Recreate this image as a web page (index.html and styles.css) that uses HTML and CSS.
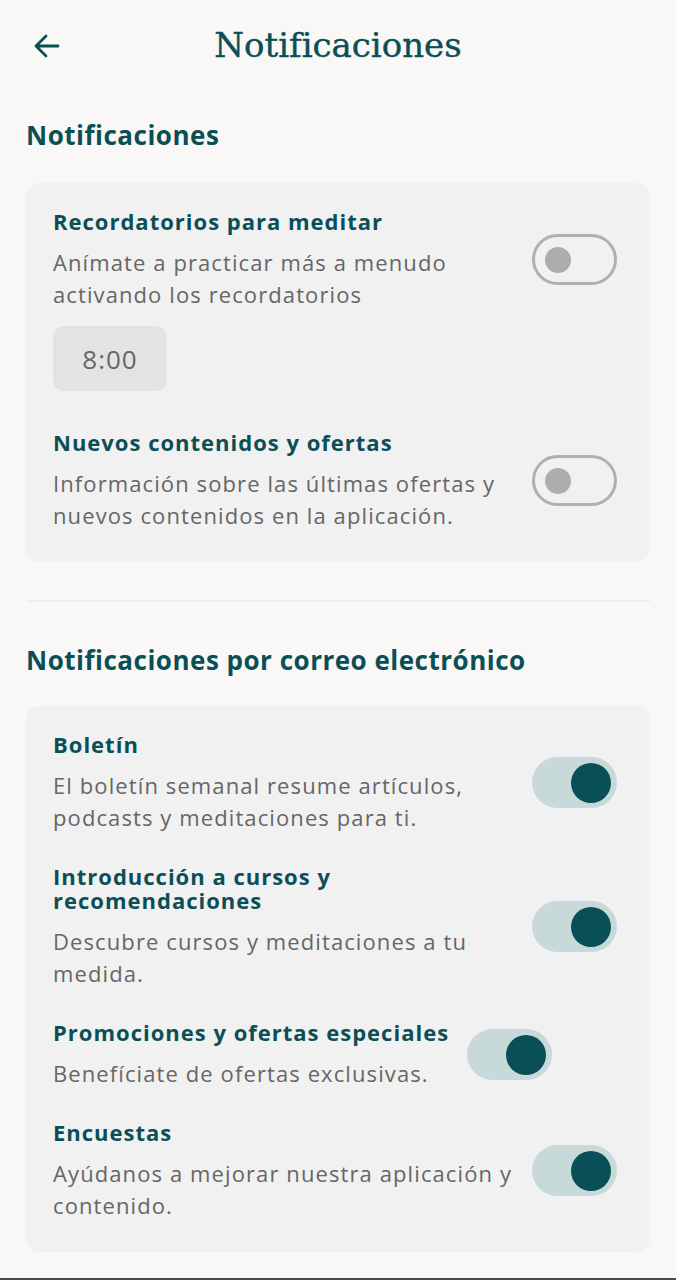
FILE: index.html
```html
<!DOCTYPE html>
<html lang="es">
<head>
<meta charset="utf-8">
<title>Notificaciones</title>
<link rel="stylesheet" href="styles.css">
</head>
<body>
<div class="page">
  <header class="topbar">
    <button class="back" aria-label="Volver">
      <svg width="30" height="30" viewBox="0 0 30 30"><path d="M27 15H5M15 5L5 15L15 25" fill="none" stroke="#0b4f56" stroke-width="2.8" stroke-linecap="round" stroke-linejoin="round"/></svg>
    </button>
    <h1 class="title">Notificaciones</h1>
  </header>

  <main class="content">
    <h2 class="section-heading">Notificaciones</h2>
    <section class="card">
      <div class="item">
        <div class="row">
          <div class="text">
            <h3 class="item-title">Recordatorios para meditar</h3>
            <p class="item-desc">Anímate a practicar más a menudo activando los recordatorios</p>
          </div>
          <span class="toggle off"><span class="knob"></span></span>
        </div>
        <div class="time-chip">8:00</div>
      </div>
      <div class="item">
        <div class="row">
          <div class="text">
            <h3 class="item-title">Nuevos contenidos y ofertas</h3>
            <p class="item-desc">Información sobre las últimas ofertas y nuevos contenidos en la aplicación.</p>
          </div>
          <span class="toggle off"><span class="knob"></span></span>
        </div>
      </div>
    </section>

    <hr class="divider">

    <h2 class="section-heading">Notificaciones por correo electrónico</h2>
    <section class="card">
      <div class="item">
        <div class="row">
          <div class="text">
            <h3 class="item-title">Boletín</h3>
            <p class="item-desc">El boletín semanal resume artículos, podcasts y meditaciones para ti.</p>
          </div>
          <span class="toggle on"><span class="knob"></span></span>
        </div>
      </div>
      <div class="item">
        <div class="row">
          <div class="text">
            <h3 class="item-title">Introducción a cursos y recomendaciones</h3>
            <p class="item-desc">Descubre cursos y meditaciones a tu medida.</p>
          </div>
          <span class="toggle on"><span class="knob"></span></span>
        </div>
      </div>
      <div class="item">
        <div class="row">
          <div class="text">
            <h3 class="item-title">Promociones y ofertas especiales</h3>
            <p class="item-desc">Benefíciate de ofertas exclusivas.</p>
          </div>
          <span class="toggle on"><span class="knob"></span></span>
        </div>
      </div>
      <div class="item">
        <div class="row">
          <div class="text">
            <h3 class="item-title">Encuestas</h3>
            <p class="item-desc">Ayúdanos a mejorar nuestra aplicación y contenido.</p>
          </div>
          <span class="toggle on"><span class="knob"></span></span>
        </div>
      </div>
    </section>
  </main>
  <div class="navline"></div>
</div>
</body>
</html>
```
FILE: styles.css
```css
* { box-sizing: border-box; }
html, body { margin: 0; padding: 0; }
body {
  background: #f9f8f6;
  font-family: "Open Sans", "Noto Sans", sans-serif;
  color: #0b4f56;
}
.page {
  min-height: 1280px;
  display: flex;
  flex-direction: column;
}
.topbar {
  position: relative;
  height: 90px;
  display: flex;
  align-items: center;
  justify-content: center;
}
.back {
  position: absolute;
  left: 31px;
  top: 31px;
  width: 30px;
  height: 30px;
  padding: 0;
  border: 0;
  background: none;
  display: flex;
}
.title {
  margin: 0;
  font-family: "DejaVu Serif", "Liberation Serif", serif;
  font-weight: 400;
  font-size: 34px;
  line-height: 40px;
  color: #0b4f56;
  -webkit-text-stroke: 0.4px #0b4f56;
}
.content {
  padding: 0 26px;
  display: flex;
  flex-direction: column;
}
.section-heading {
  margin: 29px 0 32px;
  font-size: 26px;
  line-height: 32px;
  letter-spacing: 0.5px;
  font-weight: 700;
  color: #0b4f56;
}
.card {
  background: #f1f1f1;
  border-radius: 14px;
  padding: 26px 33px 31px 27px;
  display: flex;
  flex-direction: column;
  gap: 31px;
}
.row {
  display: flex;
  align-items: center;
  gap: 18px;
}
.text {
  flex: 0 1 auto;
  display: flex;
  flex-direction: column;
  gap: 13px;
}
.item-title {
  margin: 0;
  font-size: 22px;
  line-height: 24px;
  letter-spacing: 1px;
  font-weight: 700;
  color: #0b4f56;
}
.item-desc {
  margin: 0;
  font-size: 22px;
  line-height: 32px;
  letter-spacing: 1.1px;
  font-weight: 400;
  color: #666666;
}
.toggle {
  flex: 0 0 auto;
  width: 85px;
  height: 51px;
  border-radius: 26px;
  display: flex;
  align-items: center;
}
.toggle.off {
  border: 3px solid #b0b0b0;
  padding-left: 10px;
}
.toggle.off .knob {
  width: 26px;
  height: 26px;
  border-radius: 50%;
  background: #adadad;
}
.toggle.on {
  background: #c8d9da;
  justify-content: flex-end;
  padding-right: 6px;
}
.toggle.on .knob {
  width: 40px;
  height: 40px;
  border-radius: 50%;
  background: #0a4f57;
}
.time-chip {
  margin-top: 16px;
  margin-bottom: 8px;
  width: 114px;
  height: 65px;
  border-radius: 11px;
  background: #e3e3e3;
  color: #666666;
  font-size: 26px;
  letter-spacing: 1px;
  display: flex;
  align-items: center;
  justify-content: center;
}
.divider {
  margin: 38px 0 0;
  border: 0;
  height: 2px;
  background: #efeeeb;
}
.divider + .section-heading {
  margin-top: 42px;
  margin-bottom: 30px;
}
.navline {
  margin-top: auto;
  height: 2px;
  background: #4a4a4a;
}
```
